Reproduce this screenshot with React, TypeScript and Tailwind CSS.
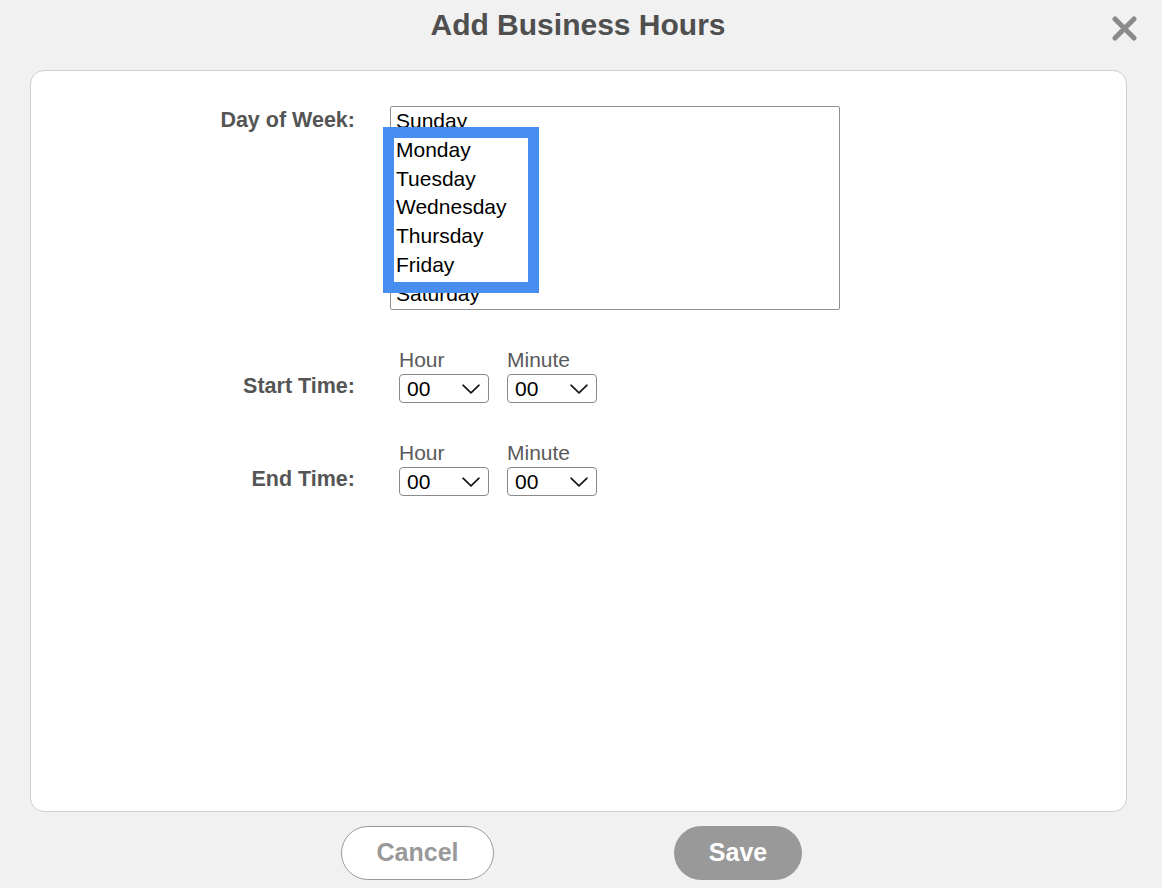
import React from "react";

const days = ["Sunday", "Monday", "Tuesday", "Wednesday", "Thursday", "Friday", "Saturday"];

function Chevron() {
  return (
    <svg width="18" height="10" viewBox="0 0 18 10" fill="none" className="shrink-0">
      <path d="M1 1.2 L9 8.8 L17 1.2" stroke="#111" strokeWidth="1.6" strokeLinecap="round" strokeLinejoin="round" />
    </svg>
  );
}

function Select() {
  return (
    <div className="flex h-[29px] w-[90px] items-center justify-between rounded-[4px] border border-[#8a8a8a] bg-white pl-[7px] pr-[8px] text-[21px] leading-none text-black">
      <span>00</span>
      <Chevron />
    </div>
  );
}

function TimeRow({ label }: { label: string }) {
  return (
    <div className="mt-[38px] flex">
      <div className="flex w-[324px] flex-col justify-end">
        <div className="mb-[2px] flex h-[29px] items-center justify-end text-[21.5px] font-bold text-[#555]">{label}</div>
      </div>
      <div className="ml-[44px] flex gap-[18px]">
        {["Hour", "Minute"].map((l) => (
          <div key={l} className="flex flex-col">
            <div className="text-[21px] leading-[24px] text-[#5a5a5a]">{l}</div>
            <div className="mt-[2px]">
              <Select />
            </div>
          </div>
        ))}
      </div>
    </div>
  );
}

export default function App() {
  return (
    <div
      className="relative flex h-[888px] w-full flex-col bg-[#f1f1f1]"
      style={{ fontFamily: '"Liberation Sans", Arial, Helvetica, sans-serif' }}
    >
      <div className="flex h-[70px] justify-center pr-[6px] pt-[7px]">
        <h1 className="text-[30px] font-bold leading-[36px] text-[#4f4f4f]">Add Business Hours</h1>
      </div>
      <button className="absolute right-[25px] top-[16px]" aria-label="Close">
        <svg width="25" height="25" viewBox="0 0 25 25">
          <path d="M3 3 L22 22 M22 3 L3 22" stroke="#8a8a8a" strokeWidth="5" strokeLinecap="round" />
        </svg>
      </button>

      <div className="ml-[30px] mr-[35px] h-[742px] rounded-[14px] border border-[#cfcfcf] bg-white pt-[35px]">
        <div className="flex">
          <div className="w-[324px] text-right text-[21.5px] font-bold leading-[28.8px] text-[#555]">Day of Week:</div>
          <div className="relative ml-[35px]">
            <div className="h-[204px] w-[450px] overflow-hidden rounded-[2px] border border-[#8f8f8f] bg-white">
              {days.map((d) => (
                <div key={d} className="pl-[5px] text-[21px] leading-[28.8px] text-black">
                  {d}
                </div>
              ))}
            </div>
            <div className="pointer-events-none absolute left-[-7px] top-[21px] h-[166px] w-[156px] border-[11px] border-[#478ef0]" />
          </div>
        </div>

        <TimeRow label="Start Time:" />
        <TimeRow label="End Time:" />
      </div>

      <div className="mt-[14px] flex justify-center gap-[180px] pr-[19px]">
        <button className="flex h-[54px] w-[153px] items-center justify-center rounded-full border border-[#9a9a9a] bg-white text-[25px] font-bold text-[#999]">
          Cancel
        </button>
        <button className="flex h-[54px] w-[128px] items-center justify-center rounded-full bg-[#999] text-[25px] font-bold text-white">
          Save
        </button>
      </div>
    </div>
  );
}
